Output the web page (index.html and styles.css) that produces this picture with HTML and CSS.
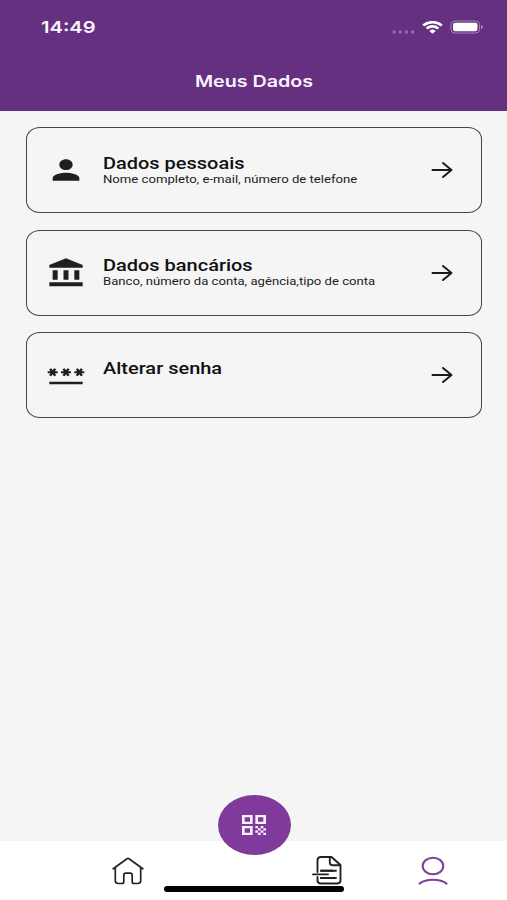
FILE: index.html
```html
<!DOCTYPE html>
<html lang="pt-BR">
<head>
    <meta charset="UTF-8">
    <title>Meus Dados</title>
    <link rel="stylesheet" href="styles.css">
</head>
<body>
    <header>
        <div class="status">
            <span class="hora">14:49</span>
            <div class="status-icones">
                <svg class="sinal" viewBox="0 0 23 4" preserveAspectRatio="none">
                    <circle cx="2" cy="2" r="1.7"/><circle cx="8.2" cy="2" r="1.7"/><circle cx="14.4" cy="2" r="1.7"/><circle cx="20.6" cy="2" r="1.7"/>
                </svg>
                <svg class="wifi" viewBox="0 0 17 12" preserveAspectRatio="none">
                    <path d="M8.5 2.4c2.4 0 4.6.9 6.3 2.5.1.1.3.1.5 0l1.2-1.2c.2-.2.2-.4 0-.6a11.6 11.6 0 0 0-16 0c-.2.2-.2.4 0 .6l1.2 1.2c.2.1.4.1.5 0A9.2 9.2 0 0 1 8.5 2.4z"/>
                    <path d="M8.5 6.3c1.3 0 2.6.5 3.6 1.4.1.1.3.1.5 0l1.2-1.2c.2-.2.2-.4 0-.6a7.7 7.7 0 0 0-10.6 0c-.2.2-.2.4 0 .6l1.2 1.2c.2.1.4.1.5 0 1-.9 2.3-1.4 3.6-1.4z"/>
                    <path d="M10.8 8.9c.2.2.2.4 0 .6l-2 2.1c-.2.2-.4.2-.6 0l-2-2.1c-.2-.2-.2-.4 0-.6a3.6 3.6 0 0 1 4.6 0z"/>
                </svg>
                <svg class="bateria" viewBox="0 0 33 14" preserveAspectRatio="none">
                    <rect class="borda" x="1" y="1" width="28.5" height="12" rx="4" ry="3.5"/>
                    <rect x="3" y="2.7" width="24.5" height="8.6" rx="2.2"/>
                    <path class="polo" d="M31 5v4.2c1-.3 1.7-1.1 1.7-2.1S32 5.3 31 5z"/>
                </svg>
            </div>
        </div>
        <h1><span>Meus Dados</span></h1>
    </header>

    <main>
        <a class="card">
            <svg class="icone" viewBox="0 0 24 24" preserveAspectRatio="none">
                <path d="M12 12c2.21 0 4-1.79 4-4s-1.79-4-4-4-4 1.79-4 4 1.79 4 4 4zm0 2c-2.67 0-8 1.34-8 4v2h16v-2c0-2.66-5.33-4-8-4z"/>
            </svg>
            <div class="texto">
                <h2>Dados pessoais</h2>
                <p>Nome completo, e-mail, número de telefone</p>
            </div>
            <svg class="seta" viewBox="0 0 22 18" preserveAspectRatio="none"><path d="M1.5 9h19M12 2l8.5 7-8.5 7"/></svg>
        </a>
        <a class="card">
            <svg class="icone" viewBox="0 0 24 24" preserveAspectRatio="none">
                <path d="M4 10v7h3v-7H4zm6.5 0v7h3v-7h-3zM2 22h20v-3H2v3zm15-12v7h3v-7h-3zm-5-9L2 6v2h20V6L12 1z"/>
            </svg>
            <div class="texto">
                <h2>Dados bancários</h2>
                <p>Banco, número da conta, agência,tipo de conta</p>
            </div>
            <svg class="seta" viewBox="0 0 22 18" preserveAspectRatio="none"><path d="M1.5 9h19M12 2l8.5 7-8.5 7"/></svg>
        </a>
        <a class="card">
            <svg class="icone" viewBox="0 0 24 24" preserveAspectRatio="none">
                <path d="M2 17h20v2H2v-2zm1.15-4.05L4 11.47l.85 1.48 1.3-.75-.85-1.48H7v-1.5H5.3l.85-1.47L4.85 7 4 8.47 3.15 7l-1.3.75.85 1.47H1v1.5h1.7l-.85 1.48 1.3.75zm6.7-.75l1.3.75.85-1.48.85 1.48 1.3-.75-.85-1.48H15v-1.5h-1.7l.85-1.47-1.3-.75L12 8.47 11.15 7l-1.3.75.85 1.47H9v1.5h1.7l-.85 1.48zM23 9.22h-1.7l.85-1.47-1.3-.75L20 8.47 19.15 7l-1.3.75.85 1.47H17v1.5h1.7l-.85 1.48 1.3.75.85-1.48.85 1.48 1.3-.75-.85-1.48H23v-1.5z"/>
            </svg>
            <div class="texto">
                <h2>Alterar senha</h2>
                <p></p>
            </div>
            <svg class="seta" viewBox="0 0 22 18" preserveAspectRatio="none"><path d="M1.5 9h19M12 2l8.5 7-8.5 7"/></svg>
        </a>
    </main>

    <nav>
        <svg class="casa" viewBox="0 0 32 28">
            <path d="M1.2 11.8L15 1.7a1.6 1.6 0 0 1 2 0l13.8 10.1M3.3 10.5v13.3q0 2.7 3.2 2.7h3.3q2 0 2-1.8v-6.5q0-2 2.2-2h4q2.2 0 2.2 2v6.5q0 1.8 2 1.8h3.3q3.2 0 3.2-2.7V10.5"/>
        </svg>
        <svg class="extrato" viewBox="0 0 30 29">
            <path d="M5.5 16V4q0-3 3.5-3h10.5l9 8v15.5q0 3-3.5 3H9q-3.5 0-3.5-3V21M17.8 1v5.8q0 2.5 3 2.5h7.5M9 14.7h11.5M1 18.4h15M9 22h11.5"/>
            <path d="M9 14.7h15M9 22h15"/>
        </svg>
        <svg class="perfil" viewBox="0 0 30 29">
            <ellipse cx="15" cy="10" rx="10.3" ry="8.3"/><path d="M1.5 27.6C8 22.3 22 22.3 28.5 27.6"/>
        </svg>
    </nav>
    <div class="botao-qr">
        <svg viewBox="0 0 18 18" preserveAspectRatio="none">
            <path fill-rule="evenodd" d="M0 0h8v8H0zM2 2v4h4V2zM10 0h8v8h-8zM12 2v4h4V2zM0 10h8v8H0zM2 12v4h4v-4z"/>
            <path d="M10 10h2v2h-2zM12 12h2v2h-2zM14 10h2v2h-2zM16 12h2v2h-2zM10 14h2v2h-2zM12 16h2v2h-2zM14 14h2v2h-2zM16 16h2v2h-2z"/>
        </svg>
    </div>
    <div class="indicador"></div>
</body>
</html>
```
FILE: styles.css
```css
* {
    box-sizing: border-box;
}
body {
    margin: 0;
    height: 900px;
    display: flex;
    flex-direction: column;
    position: relative;
    overflow: hidden;
    background-color: #f5f5f5;
    color: #1c1c1c;
    font-family: Roboto, sans-serif;
}
h1, h2, p {
    margin: 0;
}
svg {
    display: block;
    flex-shrink: 0;
}
header {
    height: 110.5px;
    background-color: #663080;
    color: #fbf3ff;
    font-family: Inter, sans-serif;
}
.status {
    height: 54px;
    padding: 0 24px 0 41px;
    display: flex;
    justify-content: space-between;
    align-items: center;
}
.hora {
    font-size: 16.5px;
    font-weight: 600;
    transform: scaleX(1.22);
    transform-origin: left;
}
.status-icones {
    display: flex;
    align-items: center;
    gap: 7px;
    fill: #fff;
}
.sinal {
    width: 23px;
    height: 4px;
    margin-top: 9px;
    opacity: 0.3;
}
.wifi {
    width: 21px;
    height: 13px;
}
.bateria {
    width: 33px;
    height: 14px;
}
.borda {
    fill: none;
    stroke: #fff;
    opacity: 0.4;
}
.polo {
    opacity: 0.45;
}
h1 {
    height: 56px;
    padding-left: 1px;
    line-height: 55px;
    text-align: center;
    font-size: 16px;
    font-weight: 570;
}
h1 span {
    display: inline-block;
    transform: scaleX(1.23);
}
main {
    flex: 1;
    padding: 16.5px 25px 0 26px;
    display: flex;
    flex-direction: column;
    gap: 16.5px;
}
.card {
    height: 86px;
    padding: 0 28px 0 18.5px;
    display: flex;
    align-items: center;
    border: 1.5px solid #444;
    border-radius: 14px / 12px;
}
.icone {
    width: 40px;
    height: 32px;
    fill: #1f1f1f;
}
.texto {
    flex: 1;
    height: 33px;
    margin-left: 17.5px;
    white-space: nowrap;
}
h2 {
    width: fit-content;
    font-size: 16.5px;
    line-height: 19px;
    font-weight: 550;
    color: #111;
    transform: scaleX(1.21);
    transform-origin: left;
}
p {
    width: fit-content;
    font-size: 10.5px;
    line-height: 13px;
    transform: scaleX(1.25);
    transform-origin: left;
}
.seta {
    width: 22px;
    height: 18px;
    fill: none;
    stroke: #1c1c1c;
    stroke-width: 2;
    stroke-linecap: round;
    stroke-linejoin: round;
}
nav {
    height: 59px;
    padding: 0 59px 0 112px;
    display: flex;
    align-items: center;
    background-color: #fff;
    fill: none;
    stroke: #222;
    stroke-width: 1.7;
    stroke-linecap: round;
    stroke-linejoin: round;
}
.casa {
    width: 32px;
    height: 28px;
}
.extrato {
    width: 30px;
    height: 29px;
    margin-left: 167.5px;
    stroke-width: 1.9;
}
.perfil {
    width: 30px;
    height: 29px;
    margin-left: auto;
    stroke: #7f3f9c;
    stroke-width: 2;
}
.botao-qr {
    position: absolute;
    left: 217.5px;
    bottom: 45px;
    width: 73px;
    height: 60px;
    display: flex;
    align-items: center;
    justify-content: center;
    border-radius: 50%;
    background-color: #7f3a9c;
}
.botao-qr svg {
    width: 24px;
    height: 20px;
    fill: #fbf0ff;
}
.indicador {
    position: absolute;
    left: 164px;
    bottom: 8px;
    width: 180px;
    height: 6px;
    border-radius: 3px;
    background-color: #000;
}
```
